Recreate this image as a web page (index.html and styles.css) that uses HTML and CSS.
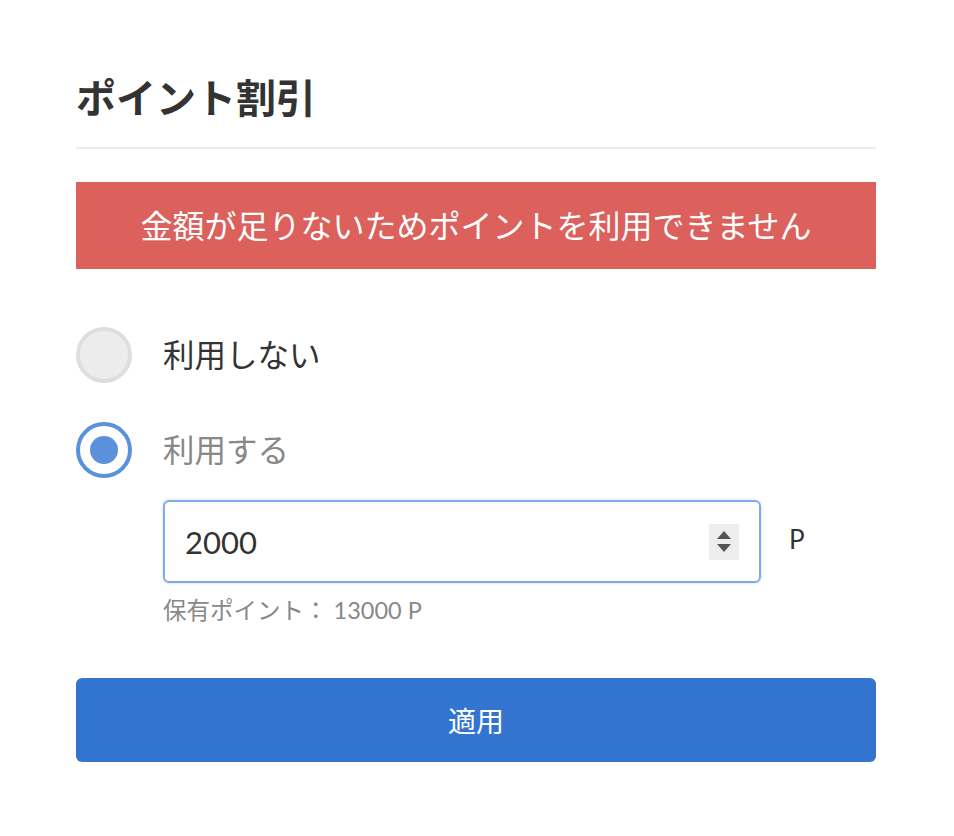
FILE: index.html
```html
<!DOCTYPE html>
<html lang="ja">
<head>
    <meta charset="UTF-8">
    <meta name="viewport" content="width=device-width, initial-scale=1.0">
    <title>ポイント割引</title>
    <link rel="stylesheet" href="styles.css">
</head>
<body>

<div class="panel">
    <h1 class="panel-title">ポイント割引</h1>

    <div class="alert">金額が足りないためポイントを利用できません</div>

    <div class="options">
        <label class="option">
            <span class="radio"></span>
            <span class="option-label">利用しない</span>
        </label>
        <label class="option is-checked">
            <span class="radio"></span>
            <span class="option-label">利用する</span>
        </label>
    </div>

    <div class="point-input">
        <div class="field">
            <input type="text" class="field-input" value="2000">
            <span class="spinner">
                <span class="arrow-up"></span>
                <span class="arrow-down"></span>
            </span>
        </div>
        <span class="unit">P</span>
    </div>
    <p class="hint">保有ポイント： 13000 P</p>

    <button class="apply-btn">適用</button>
</div>

</body>
</html>
```

FILE: styles.css
```css
body {
    margin: 0;
    background-color: #fff;
    font-family: Lato, "Noto Sans CJK JP", sans-serif;
    color: #333;
}

/* 全体 */
.panel {
    width: 800px;
    margin-left: 76px;
    padding-top: 70px;
}

.panel-title {
    margin: 0;
    font-size: 40px;
    font-weight: bold;
    line-height: 56px;
    padding-bottom: 21px;
    border-bottom: 2px solid #ececec;
}

/* エラーメッセージ */
.alert {
    margin-top: 33px;
    background-color: #dc605b;
    color: #fff;
    text-align: center;
    font-size: 32px;
    line-height: 45px;
    padding: 21px 0;
}

/* ラジオボタン */
.options {
    margin-top: 58px;
    display: flex;
    flex-direction: column;
    gap: 39px;
}
.option {
    display: flex;
    align-items: center;
    gap: 31px;
    cursor: pointer;
}
.radio {
    width: 56px;
    height: 56px;
    box-sizing: border-box;
    border-radius: 50%;
    border: 4px solid #dedede;
    background-color: #ececec;
    display: flex;
    justify-content: center;
    align-items: center;
}
.is-checked .radio {
    border-color: #5b91db;
    background-color: #fff;
}
.is-checked .radio::after {
    content: "";
    width: 28px;
    height: 28px;
    border-radius: 50%;
    background-color: #5b91db;
}
.option-label {
    font-size: 31.5px;
    line-height: 40px;
}
.is-checked .option-label {
    color: #888;
}

/* ポイント入力 */
.point-input {
    margin-top: 22px;
    margin-left: 87px;
    display: flex;
    align-items: center;
    gap: 28px;
}
.field {
    width: 598px;
    height: 83px;
    box-sizing: border-box;
    border: 2px solid #82aaea;
    border-radius: 6px;
    box-shadow: 0 0 3px rgba(91, 145, 219, 0.35);
    display: flex;
    align-items: center;
    padding: 0 20px 0 20px;
}
.field-input {
    flex: 1;
    border: none;
    outline: none;
    padding: 0;
    font-family: Lato, "Noto Sans CJK JP", sans-serif;
    font-size: 31px;
    color: #333;
    background: transparent;
}
.spinner {
    width: 30px;
    height: 36px;
    background-color: #eee;
    display: flex;
    flex-direction: column;
    justify-content: center;
    align-items: center;
    gap: 5px;
}
.arrow-up, .arrow-down {
    width: 0;
    height: 0;
    border-left: 7px solid transparent;
    border-right: 7px solid transparent;
}
.arrow-up { border-bottom: 8px solid #555; }
.arrow-down { border-top: 8px solid #555; }

.unit {
    font-size: 26px;
    margin-top: -5px;
}

.hint {
    margin: 12px 0 0 87px;
    font-size: 23.5px;
    line-height: 30px;
    color: #888;
}

/* 適用ボタン */
.apply-btn {
    margin-top: 53px;
    width: 100%;
    height: 84px;
    border: none;
    border-radius: 6px;
    background-color: #3274d0;
    color: #fff;
    font-family: Lato, "Noto Sans CJK JP", sans-serif;
    font-size: 28px;
    cursor: pointer;
}
```
